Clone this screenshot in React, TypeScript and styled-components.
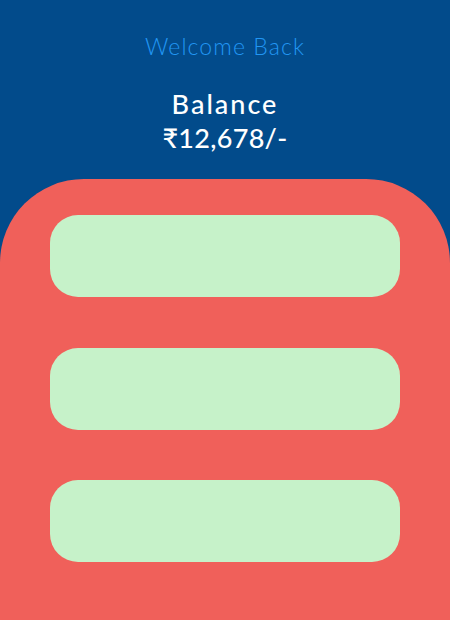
import React from "react";
import styled, { createGlobalStyle } from "styled-components";

const Global = createGlobalStyle`
  html, body { margin: 0; padding: 0; background: #024b8b; }
  body { font-family: Lato, "Noto Sans", sans-serif; }
`;

const Page = styled.div`
  width: 450px;
  height: 620px;
  background: #024b8b;
  display: flex;
  flex-direction: column;
  overflow: hidden;
`;

const Header = styled.header`
  display: flex;
  flex-direction: column;
  align-items: center;
  padding-top: 31px;
  height: 148px;
  box-sizing: border-box;
`;

const Welcome = styled.div`
  color: #2196f3;
  font-size: 23px;
  font-weight: 300;
  line-height: 30px;
  letter-spacing: 1.1px;
`;

const Title = styled.div<{ $spacing: number }>`
  color: #ffffff;
  font-size: 27px;
  font-weight: 500;
  line-height: 34px;
  letter-spacing: ${(p) => p.$spacing}px;
`;

const Stack = styled.div`
  display: flex;
  flex-direction: column;
  align-items: center;
  margin-top: 26px;
`;

const Panel = styled.main`
  flex: 1;
  background: #f0605a;
  border-radius: 84px 84px 0 0;
  padding: 36px 50px 0;
  display: flex;
  flex-direction: column;
  gap: 50.5px;
  margin-top: 31px;
`;

const Card = styled.div`
  height: 82px;
  background: #c6f2c9;
  border-radius: 28px;
  flex-shrink: 0;
`;

export default function App() {
  return (
    <>
      <Global />
      <Page>
        <Header>
          <Welcome>Welcome Back</Welcome>
          <Stack>
            <Title $spacing={2}>Balance</Title>
            <Title $spacing={0.3}>₹12,678/-</Title>
          </Stack>
        </Header>
        <Panel>
          <Card />
          <Card />
          <Card />
        </Panel>
      </Page>
    </>
  );
}
